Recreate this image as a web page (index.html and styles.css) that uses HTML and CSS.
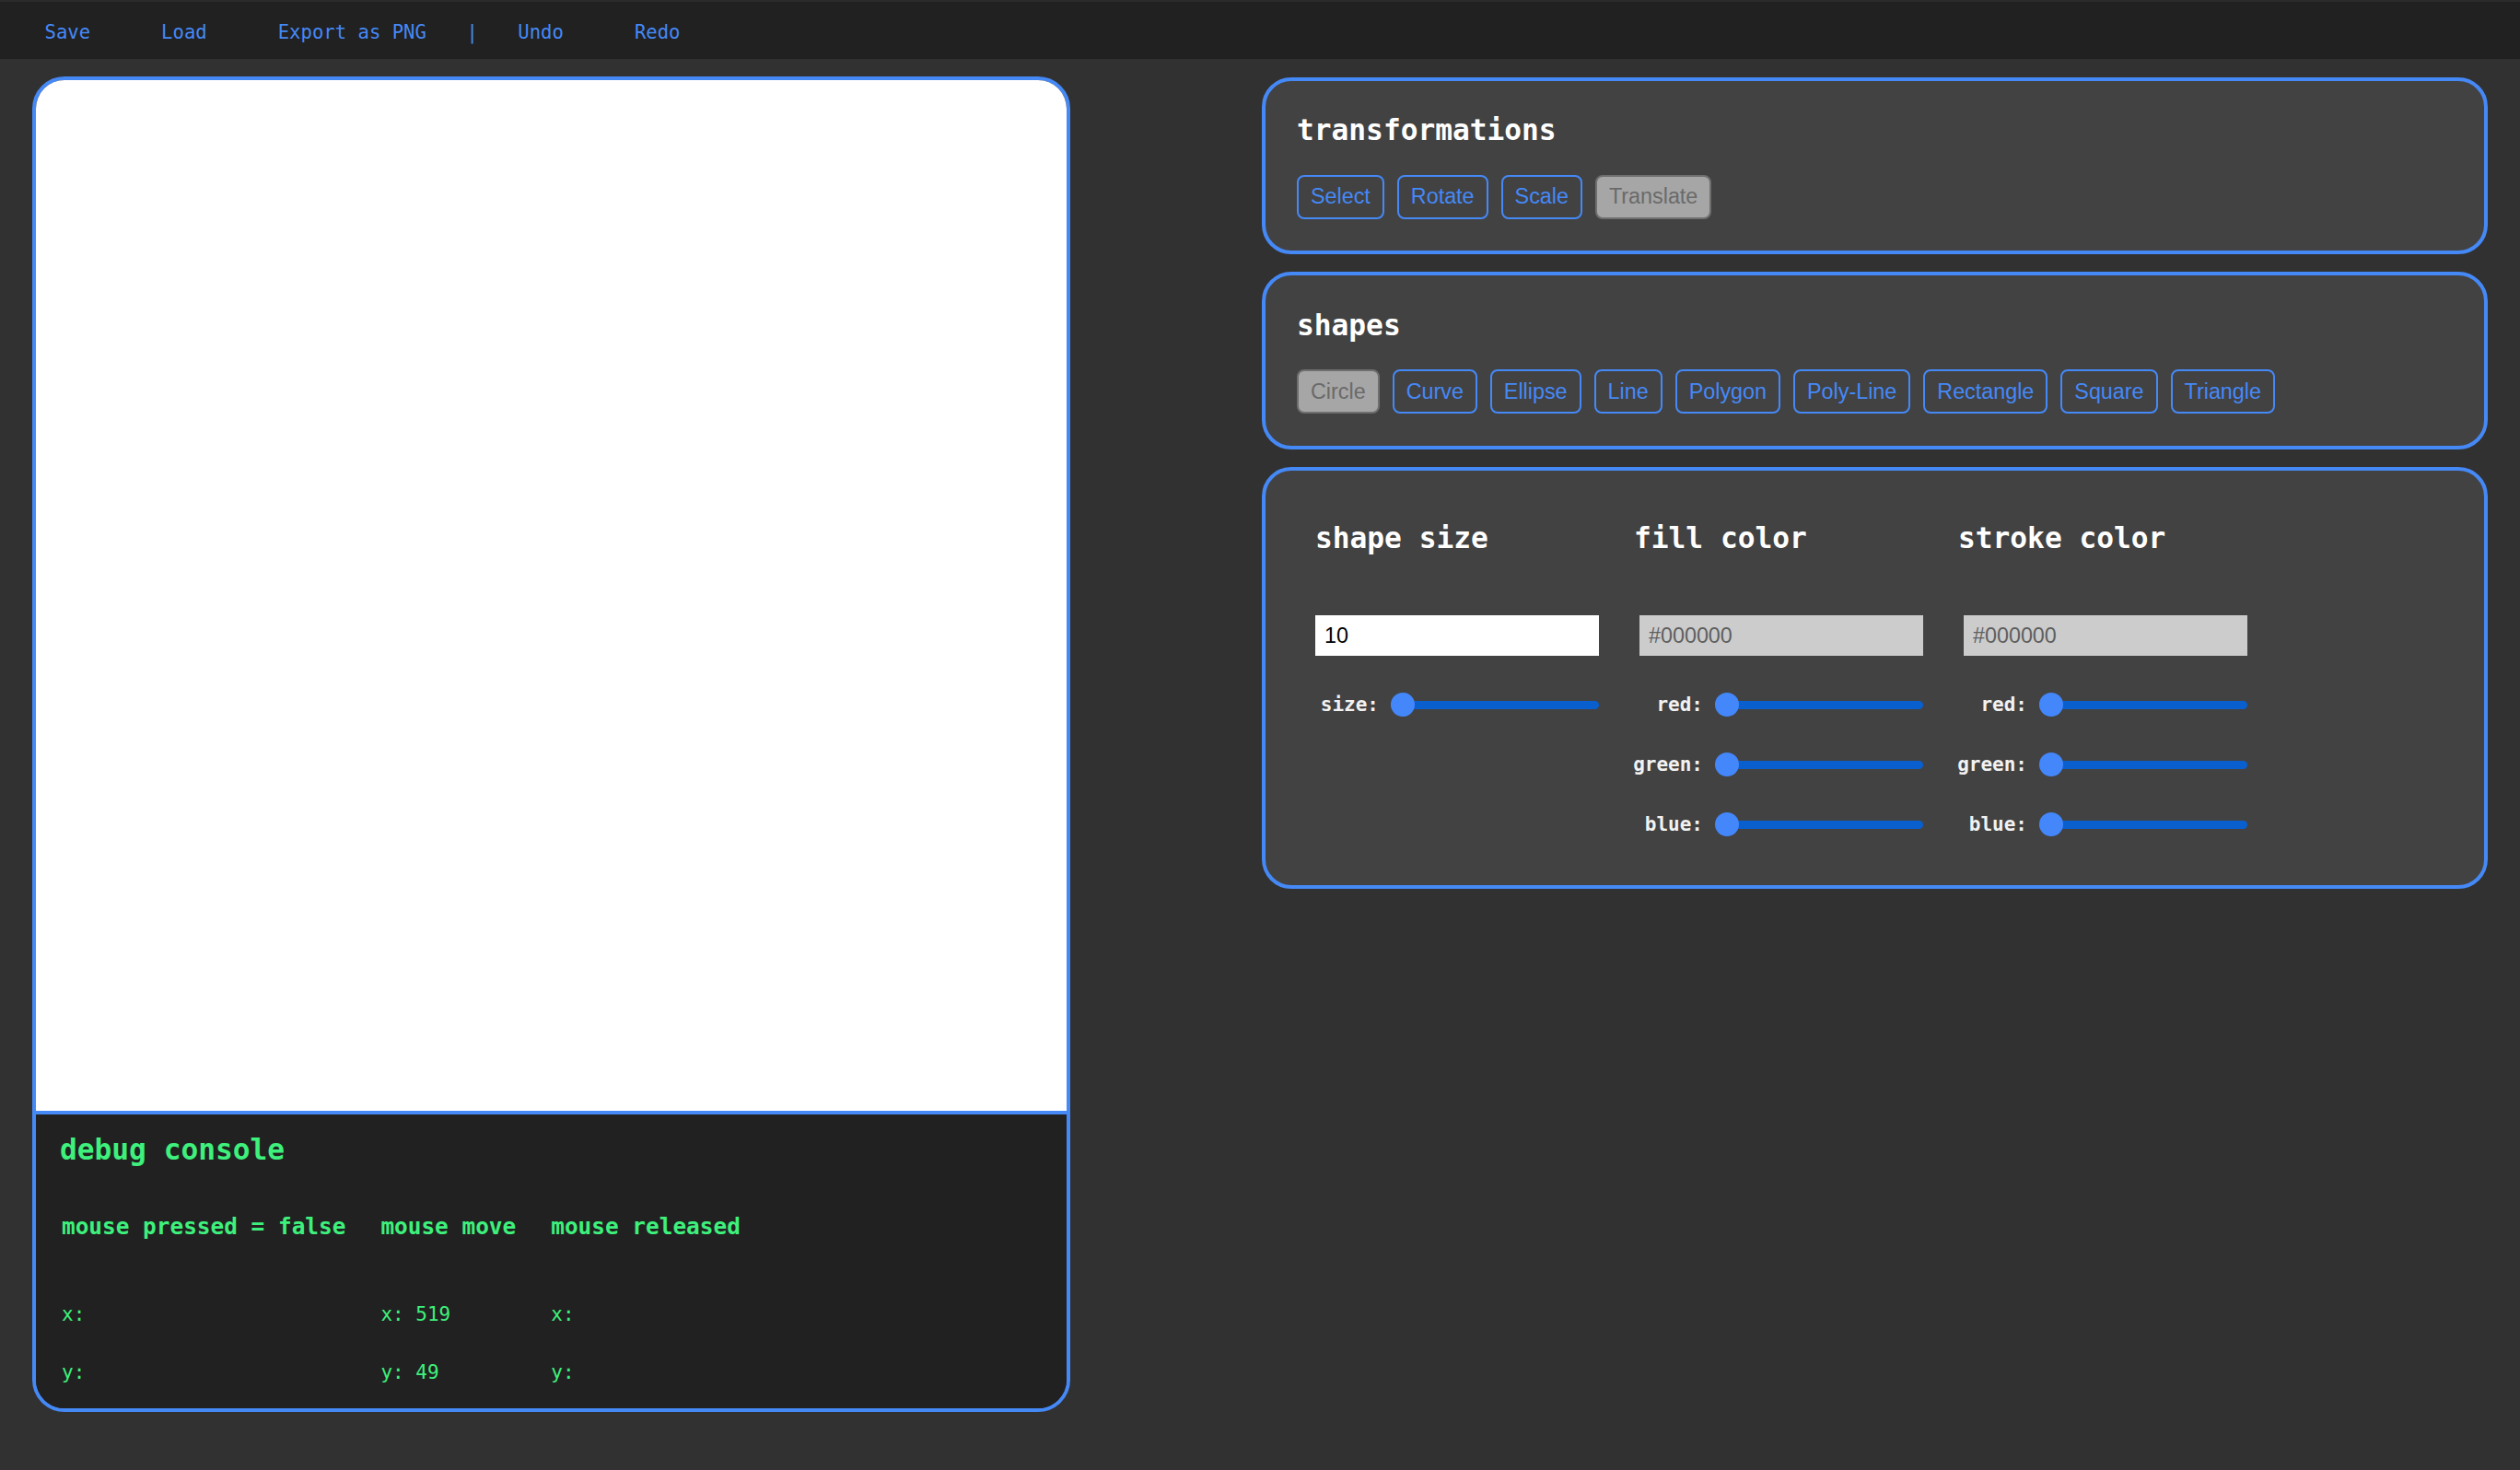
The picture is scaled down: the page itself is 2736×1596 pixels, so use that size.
FILE: index.html
```html
<!DOCTYPE html>
<html lang="en">
<head>
<meta charset="utf-8">
<title>Shape Editor</title>
<link rel="stylesheet" href="styles.css">
</head>
<body>
<nav class="topbar">
  <a class="nav-link">Save</a>
  <a class="nav-link">Load</a>
  <a class="nav-link">Export as PNG</a>
  <span class="nav-sep">|</span>
  <a class="nav-link">Undo</a>
  <a class="nav-link">Redo</a>
</nav>
<main class="workspace">
  <section class="board">
    <div class="canvas"></div>
    <div class="console">
      <h2 class="console-title">debug console</h2>
      <div class="console-grid">
        <div class="c-head">mouse pressed = false</div>
        <div class="c-head">mouse move</div>
        <div class="c-head">mouse released</div>
        <div class="c-cell">x:</div>
        <div class="c-cell">x: 519</div>
        <div class="c-cell">x:</div>
        <div class="c-cell">y:</div>
        <div class="c-cell">y: 49</div>
        <div class="c-cell">y:</div>
      </div>
    </div>
  </section>
  <aside class="controls">
    <section class="panel">
      <h2 class="panel-title">transformations</h2>
      <div class="btn-row">
        <button class="tool-btn">Select</button>
        <button class="tool-btn">Rotate</button>
        <button class="tool-btn">Scale</button>
        <button class="tool-btn is-active">Translate</button>
      </div>
    </section>
    <section class="panel">
      <h2 class="panel-title">shapes</h2>
      <div class="btn-row">
        <button class="tool-btn is-active">Circle</button>
        <button class="tool-btn">Curve</button>
        <button class="tool-btn">Ellipse</button>
        <button class="tool-btn">Line</button>
        <button class="tool-btn">Polygon</button>
        <button class="tool-btn">Poly-Line</button>
        <button class="tool-btn">Rectangle</button>
        <button class="tool-btn">Square</button>
        <button class="tool-btn">Triangle</button>
      </div>
    </section>
    <section class="panel panel-props">
      <div class="props-grid">
        <div class="prop-col">
          <h2 class="prop-title">shape size</h2>
          <input class="prop-input" type="text" value="10">
          <div class="slider-list">
            <div class="slider-row"><label class="slider-label">size:</label><input class="slider" type="range" min="10" max="100" value="10"></div>
          </div>
        </div>
        <div class="prop-col is-color">
          <h2 class="prop-title">fill color</h2>
          <input class="prop-input is-muted" type="text" value="#000000">
          <div class="slider-list">
            <div class="slider-row"><label class="slider-label">red:</label><input class="slider" type="range" min="0" max="255" value="0"></div>
            <div class="slider-row"><label class="slider-label">green:</label><input class="slider" type="range" min="0" max="255" value="0"></div>
            <div class="slider-row"><label class="slider-label">blue:</label><input class="slider" type="range" min="0" max="255" value="0"></div>
          </div>
        </div>
        <div class="prop-col is-color">
          <h2 class="prop-title">stroke color</h2>
          <input class="prop-input is-muted" type="text" value="#000000">
          <div class="slider-list">
            <div class="slider-row"><label class="slider-label">red:</label><input class="slider" type="range" min="0" max="255" value="0"></div>
            <div class="slider-row"><label class="slider-label">green:</label><input class="slider" type="range" min="0" max="255" value="0"></div>
            <div class="slider-row"><label class="slider-label">blue:</label><input class="slider" type="range" min="0" max="255" value="0"></div>
          </div>
        </div>
      </div>
    </section>
  </aside>
</main>
</body>
</html>
```
FILE: styles.css
```css
html, body {
  margin: 0;
  padding: 0;
}
body {
  background: #313131;
  min-height: 1596px;
  font-family: "DejaVu Sans Mono", "Liberation Mono", monospace;
  color: #ffffff;
}

/* top bar */
.topbar {
  box-sizing: border-box;
  height: 64px;
  border-top: 2px solid #2b2b2b;
  background: #212121;
  display: flex;
  align-items: center;
  padding: 4px 0 0 10px;
  font-size: 20.6px;
  color: #4589f7;
}
.nav-link {
  padding: 0 38.5px;
  color: #4589f7;
  cursor: pointer;
}
.nav-sep {
  margin: 0 5px;
}

/* layout */
.workspace {
  display: flex;
  justify-content: space-between;
  align-items: flex-start;
  padding: 19px 35px 0 35px;
}

/* canvas + console */
.board {
  box-sizing: border-box;
  width: 1127px;
  border: 4px solid #4589f7;
  border-radius: 35px;
  overflow: hidden;
  background: #212121;
}
.canvas {
  height: 1119px;
  background: #ffffff;
}
.console {
  box-sizing: border-box;
  height: 323px;
  border-top: 4px solid #4589f7;
  background: #212121;
  padding: 19.5px 26px 0 26px;
  color: #3ef07c;
}
.console-title {
  margin: 0;
  font-size: 31.2px;
  font-weight: bold;
  line-height: normal;
}
.console-grid {
  display: grid;
  grid-template-columns: repeat(3, auto);
  justify-content: start;
  column-gap: 38px;
  row-gap: 39.5px;
  margin: 51px 0 0 2px;
}
.c-head {
  font-size: 24.4px;
  font-weight: bold;
  margin-bottom: 29.5px;
}
.c-cell {
  font-size: 21px;
}

/* right column */
.controls {
  width: 1331px;
  margin-top: 1px;
  display: flex;
  flex-direction: column;
  gap: 19px;
}
.panel {
  box-sizing: border-box;
  border: 4px solid #4589f7;
  border-radius: 32px;
  background: #424242;
  padding: 35.2px 34px 34.5px 34px;
}
.panel-title {
  margin: 0 0 30.5px 0;
  font-size: 31.2px;
  font-weight: bold;
  line-height: normal;
  color: #ffffff;
}
.btn-row {
  display: flex;
  flex-wrap: wrap;
  gap: 14px;
}
.tool-btn {
  font-family: "Liberation Sans", Arial, sans-serif;
  font-size: 23.33px;
  line-height: normal;
  padding: 8.6px 13px;
  margin: 0;
  border: 2px solid #4589f7;
  border-radius: 8px;
  background: transparent;
  color: #4589f7;
  cursor: pointer;
}
.tool-btn.is-active {
  background: #a6a6a6;
  border-color: #6f6f6f;
  color: #6a6a6a;
}

/* properties panel */
.panel-props {
  padding: 55px 34px 53px 54px;
}
.props-grid {
  display: grid;
  grid-template-columns: repeat(3, 308px);
  column-gap: 44px;
  align-items: start;
}
.prop-col {
  display: flex;
  flex-direction: column;
}
.prop-title {
  margin: 0 0 66.3px 0;
  font-size: 31.2px;
  font-weight: bold;
  line-height: normal;
  color: #ffffff;
}
.prop-col.is-color .prop-title {
  margin-left: -6px;
}
.prop-input {
  box-sizing: border-box;
  width: 308px;
  height: 44px;
  margin: 0;
  border: none;
  outline: none;
  padding: 0 10px;
  background: #ffffff;
  color: #000000;
  font-family: "Liberation Sans", Arial, sans-serif;
  font-size: 23.33px;
}
.prop-input.is-muted {
  background: #cccccc;
  color: #5f5f5f;
}
.slider-list {
  display: flex;
  flex-direction: column;
  gap: 39px;
  margin-top: 40px;
}
.slider-row {
  display: flex;
  justify-content: flex-end;
  align-items: center;
  gap: 13px;
  height: 26px;
}
.slider-label {
  font-size: 21px;
  font-weight: bold;
  color: #f2f2f2;
  white-space: nowrap;
}
.slider {
  -webkit-appearance: none;
  appearance: none;
  width: 226px;
  height: 26px;
  margin: 0;
  padding: 0;
  background: transparent;
  flex: none;
}
.slider::-webkit-slider-runnable-track {
  height: 9px;
  background: #0a5fcf;
  border-radius: 5px;
}
.slider::-webkit-slider-thumb {
  -webkit-appearance: none;
  appearance: none;
  width: 26px;
  height: 26px;
  border-radius: 50%;
  background: #4387fb;
  border: none;
  margin-top: -8.5px;
}
```
